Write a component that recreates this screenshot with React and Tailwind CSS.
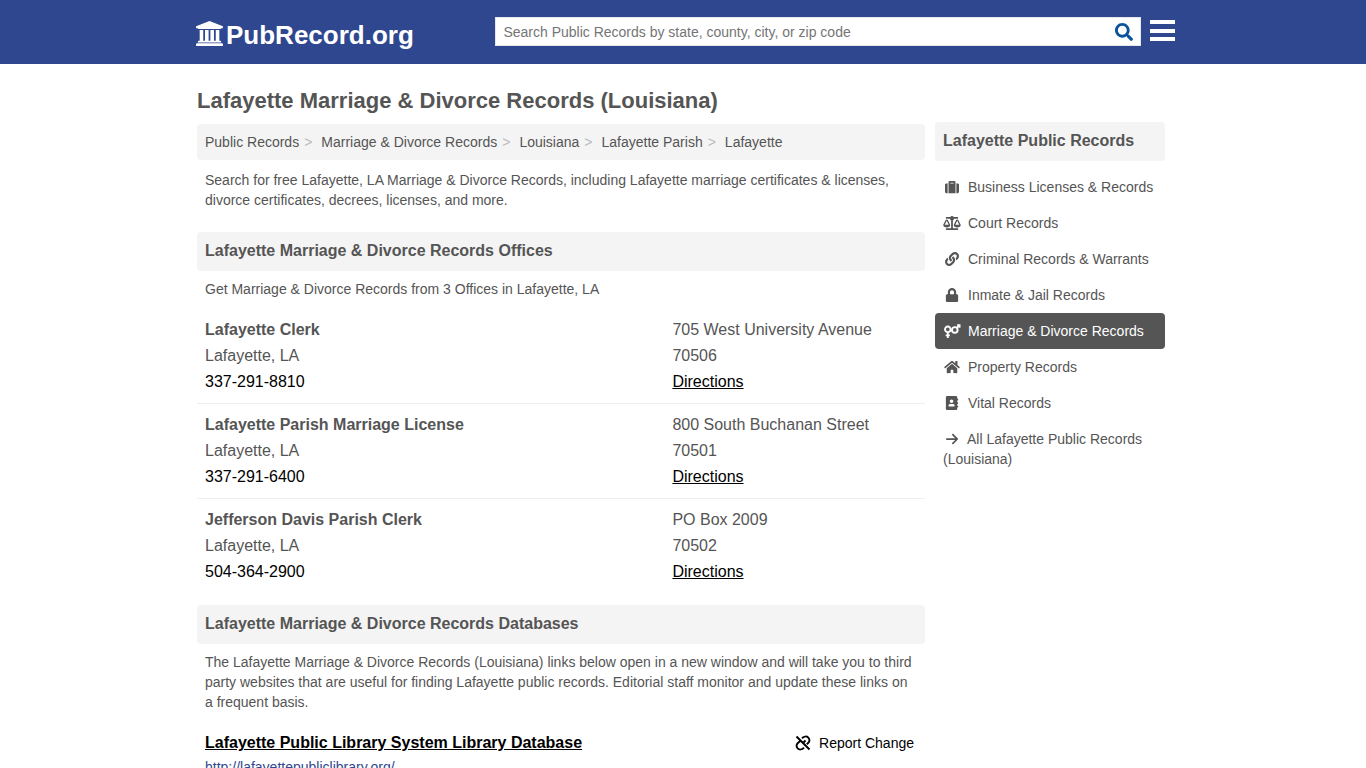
import React from 'react';
import {
  FaSearch,
  FaSuitcase,
  FaBalanceScale,
  FaLink,
  FaLock,
  FaHome,
  FaAddressBook,
} from 'react-icons/fa';
import { FaArrowRight } from 'react-icons/fa6';

const BankIcon = () => (
  <svg viewBox="0 0 1920 1792" className="mr-[3px] ml-px h-[25px] w-[27px] shrink-0" fill="currentColor">
    <path d="M960 0l960 384v128h-128q0 26-20.500 45t-48.500 19H197q-28 0-48.500-19T128 512H0V384z" />
    <path d="M256 640h256v768h128V640h256v768h128V640h256v768h128V640h256v768h59q28 0 48.500 19t20.500 45v64H128v-64q0-26 20.500-45t48.500-19h59z" />
    <path d="M1851 1600q28 0 48.500 19t20.500 45v128H0v-128q0-26 20.500-45t48.500-19z" />
  </svg>
);

const VenusMarsIcon = ({ className }) => (
  <svg viewBox="0 0 17 15" className={className} fill="none" stroke="currentColor" strokeWidth="1.9">
    <circle cx="3.800" cy="5.300" r="2.800" />
    <path d="M3.800 8.200V14M1.700 11.400h4.200" />
    <circle cx="10.800" cy="5.900" r="2.800" />
    <path d="M12.800 4l2.500-2.500" />
    <path d="M13 1h2.800v2.800" strokeWidth="1.400" />
  </svg>
);

const BrokenLinkIcon = () => (
  <svg viewBox="0 0 16 16" className="size-4 shrink-0" fill="none" stroke="currentColor" strokeWidth="1.900">
    <path d="M1.500 1.500l13 13" />
    <path d="M7 3.200C9 1.300 11.700 1 13.300 2.600c1.700 1.800 1.400 4-.2 5.400l-1.300 1.200" />
    <path d="M9 12.800C7 14.700 4.300 15 2.700 13.400 1 11.600 1.300 9.400 2.900 8L5.500 5.800" />
    <path d="M8.500 7.500l2-2" />
  </svg>
);

const breadcrumbs = ['Public Records', 'Marriage & Divorce Records', 'Louisiana', 'Lafayette Parish', 'Lafayette'];

const offices = [
  { name: 'Lafayette Clerk', city: 'Lafayette, LA', phone: '337-291-8810', address: '705 West University Avenue', zip: '70506' },
  { name: 'Lafayette Parish Marriage License', city: 'Lafayette, LA', phone: '337-291-6400', address: '800 South Buchanan Street', zip: '70501' },
  { name: 'Jefferson Davis Parish Clerk', city: 'Lafayette, LA', phone: '504-364-2900', address: 'PO Box 2009', zip: '70502' },
];

const categories = [
  { label: 'Business Licenses & Records', icon: FaSuitcase, iconClass: 'size-3.5' },
  { label: 'Court Records', icon: FaBalanceScale, iconClass: 'h-3.5 w-[18px]' },
  { label: 'Criminal Records & Warrants', icon: FaLink, iconClass: 'size-3.5' },
  { label: 'Inmate & Jail Records', icon: FaLock, iconClass: 'size-3.5' },
  { label: 'Marriage & Divorce Records', icon: VenusMarsIcon, iconClass: 'h-[15px] w-[17px]', active: true },
  { label: 'Property Records', icon: FaHome, iconClass: 'h-3.5 w-4' },
  { label: 'Vital Records', icon: FaAddressBook, iconClass: 'size-3.5' },
];

const Header = () => (
  <header className="h-16 bg-[#2f478f] text-white">
    <div className="ml-[195px] flex items-start">
      <a href="#" className="flex w-[300px] items-start pt-[15px]">
        <span className="pt-1.5">
          <BankIcon />
        </span>
        <span className="text-[26px] leading-10 font-bold">PubRecord.org</span>
      </a>
      <form className="mt-[17px] flex h-[29px] w-[646px] items-center border border-gray-200 bg-white">
        <input
          type="text"
          placeholder="Search Public Records by state, county, city, or zip code"
          className="h-full flex-1 px-[7.4px] text-sm text-gray-700 outline-none placeholder:text-[#757575]"
        />
        <button type="button" className="mr-[7px] text-[#0b529c]">
          <FaSearch className="size-[18px]" />
        </button>
      </form>
      <button type="button" className="mt-5 ml-[9px] flex w-[25px] flex-col gap-[4.5px]">
        <span className="h-1 w-full bg-white" />
        <span className="h-1 w-full bg-white" />
        <span className="h-1 w-full bg-white" />
      </button>
    </div>
  </header>
);

const SectionHeading = ({ children }) => (
  <h2 className="h-[39px] rounded bg-[#f4f4f4] px-2 pt-1.5 text-base leading-[26px] font-bold">{children}</h2>
);

const Office = ({ office }) => (
  <li className="flex h-[95px] border-b border-[#eee] px-2 pt-2 text-base leading-[26px] last:border-b-0">
    <div className="w-[467.4px]">
      <p className="font-bold">{office.name}</p>
      <p>{office.city}</p>
      <p className="text-black">{office.phone}</p>
    </div>
    <div>
      <p>{office.address}</p>
      <p>{office.zip}</p>
      <a href="#" className="text-black underline">Directions</a>
    </div>
  </li>
);

const Sidebar = () => (
  <aside className="mt-[58px] w-[230px]">
    <SectionHeading>Lafayette Public Records</SectionHeading>
    <nav className="mt-2 text-sm">
      {categories.map(({ label, icon: Icon, iconClass, active }) => (
        <a
          key={label}
          href="#"
          className={`flex h-9 items-center rounded pl-2 ${active ? 'bg-[#555] text-white' : ''}`}
        >
          <span className="mr-[7px] flex w-[18px] justify-center">
            <Icon className={iconClass} />
          </span>
          {label}
        </a>
      ))}
      <a href="#" className="block px-2 pt-2 leading-5">
        <FaArrowRight className="mr-2 ml-0.5 inline size-3.5 align-[-2px]" />
        All Lafayette Public Records (Louisiana)
      </a>
    </nav>
  </aside>
);

const App = () => {
  return (
    <div className="h-screen overflow-hidden bg-white font-['Liberation_Sans',Arial,sans-serif] text-[#555]">
      <Header />
      <div className="ml-[197px] flex gap-2.5">
        <main className="w-[728px]">
          <h1 className="pt-[22px] text-[22px] leading-[30px] font-bold">Lafayette Marriage &amp; Divorce Records (Louisiana)</h1>
          <ol className="mt-2 flex h-9 items-center rounded bg-[#f4f4f4] px-2 text-sm">
            {breadcrumbs.map((crumb, i) => (
              <li key={crumb} className="flex">
                {crumb}
                {i < breadcrumbs.length - 1 && <span className="mr-[9px] ml-[5px] text-[#bbb]">&gt;</span>}
              </li>
            ))}
          </ol>
          <p className="mt-2.5 px-2 text-sm leading-5">
            Search for free Lafayette, LA Marriage &amp; Divorce Records, including Lafayette marriage certificates &amp; licenses, divorce certificates, decrees, licenses, and more.
          </p>

          <div className="mt-[22px]">
            <SectionHeading>Lafayette Marriage &amp; Divorce Records Offices</SectionHeading>
          </div>
          <p className="mt-2 px-2 text-sm leading-5">Get Marriage &amp; Divorce Records from 3 Offices in Lafayette, LA</p>
          <ul className="mt-[10px]">
            {offices.map((office) => (
              <Office key={office.name} office={office} />
            ))}
          </ul>

          <div className="mt-[11px]">
            <SectionHeading>Lafayette Marriage &amp; Divorce Records Databases</SectionHeading>
          </div>
          <p className="mt-2 px-2 text-sm leading-5">
            The Lafayette Marriage &amp; Divorce Records (Louisiana) links below open in a new window and will take you to third party websites that are useful for finding Lafayette public records. Editorial staff monitor and update these links on a frequent basis.
          </p>
          <div className="mt-[18px] flex items-center justify-between pr-[11px] pl-2 text-black">
            <a href="#" className="text-base leading-[26px] font-bold underline">Lafayette Public Library System Library Database</a>
            <a href="#" className="flex items-center gap-2 text-sm">
              <BrokenLinkIcon />
              Report Change
            </a>
          </div>
          <p className="px-2 text-sm leading-[22px] text-[#2f478f]">http://lafayettepubliclibrary.org/</p>
        </main>
        <Sidebar />
      </div>
    </div>
  );
};

export default App;
